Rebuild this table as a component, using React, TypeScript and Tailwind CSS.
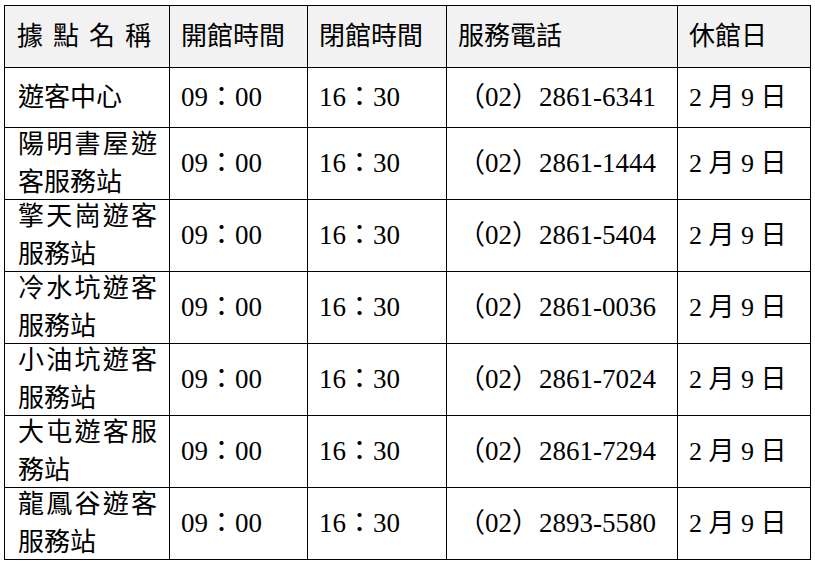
const rows = [
  { name: "遊客中心", open: "09：00", close: "16：30", phone: "2861-6341", tall: false },
  { name: "陽明書屋遊客服務站", open: "09：00", close: "16：30", phone: "2861-1444", tall: true },
  { name: "擎天崗遊客服務站", open: "09：00", close: "16：30", phone: "2861-5404", tall: true },
  { name: "冷水坑遊客服務站", open: "09：00", close: "16：30", phone: "2861-0036", tall: true },
  { name: "小油坑遊客服務站", open: "09：00", close: "16：30", phone: "2861-7024", tall: true },
  { name: "大屯遊客服務站", open: "09：00", close: "16：30", phone: "2861-7294", tall: true },
  { name: "龍鳳谷遊客服務站", open: "09：00", close: "16：30", phone: "2893-5580", tall: true },
];

const cell = "border border-black p-0 pl-[11px] align-middle";

export default function App() {
  return (
    <div className="h-[563px] w-[815px] bg-white pt-[5px] pl-[4px] text-black">
      <table
        className="w-[806px] table-fixed border-collapse text-[26px] leading-[35px]"
        style={{ fontFamily: '"Liberation Serif", "Noto Sans CJK TC", serif' }}
      >
        <colgroup>
          <col className="w-[165px]" />
          <col className="w-[138px]" />
          <col className="w-[139px]" />
          <col className="w-[231px]" />
          <col className="w-[133px]" />
        </colgroup>
        <thead>
          <tr className="h-[62px] bg-[#f2f2f2]">
            <th className={`${cell} pl-[12px] text-left font-normal tracking-[10px]`}>據點名稱</th>
            <th className={`${cell} text-left font-normal`}>開館時間</th>
            <th className={`${cell} text-left font-normal`}>閉館時間</th>
            <th className={`${cell} text-left font-normal`}>服務電話</th>
            <th className={`${cell} text-left font-normal`}>休館日</th>
          </tr>
        </thead>
        <tbody>
          {rows.map((row) => (
            <tr key={row.name} className={row.tall ? "h-[72px]" : "h-[60px]"}>
              <td className={`${cell} pr-[12px] pl-[13px]`}>
                <div
                  className={
                    row.tall
                      ? "flex h-[70px] items-center text-justify leading-[38px]"
                      : "text-justify"
                  }
                >
                  <div>{row.name}</div>
                </div>
              </td>
              <td className={`${cell} text-[27px]`}>{row.open}</td>
              <td className={`${cell} text-[27px]`}>{row.close}</td>
              <td className={`${cell} text-[27px]`}>（02）{row.phone}</td>
              <td className={cell}>2 月 9 日</td>
            </tr>
          ))}
        </tbody>
      </table>
    </div>
  );
}
